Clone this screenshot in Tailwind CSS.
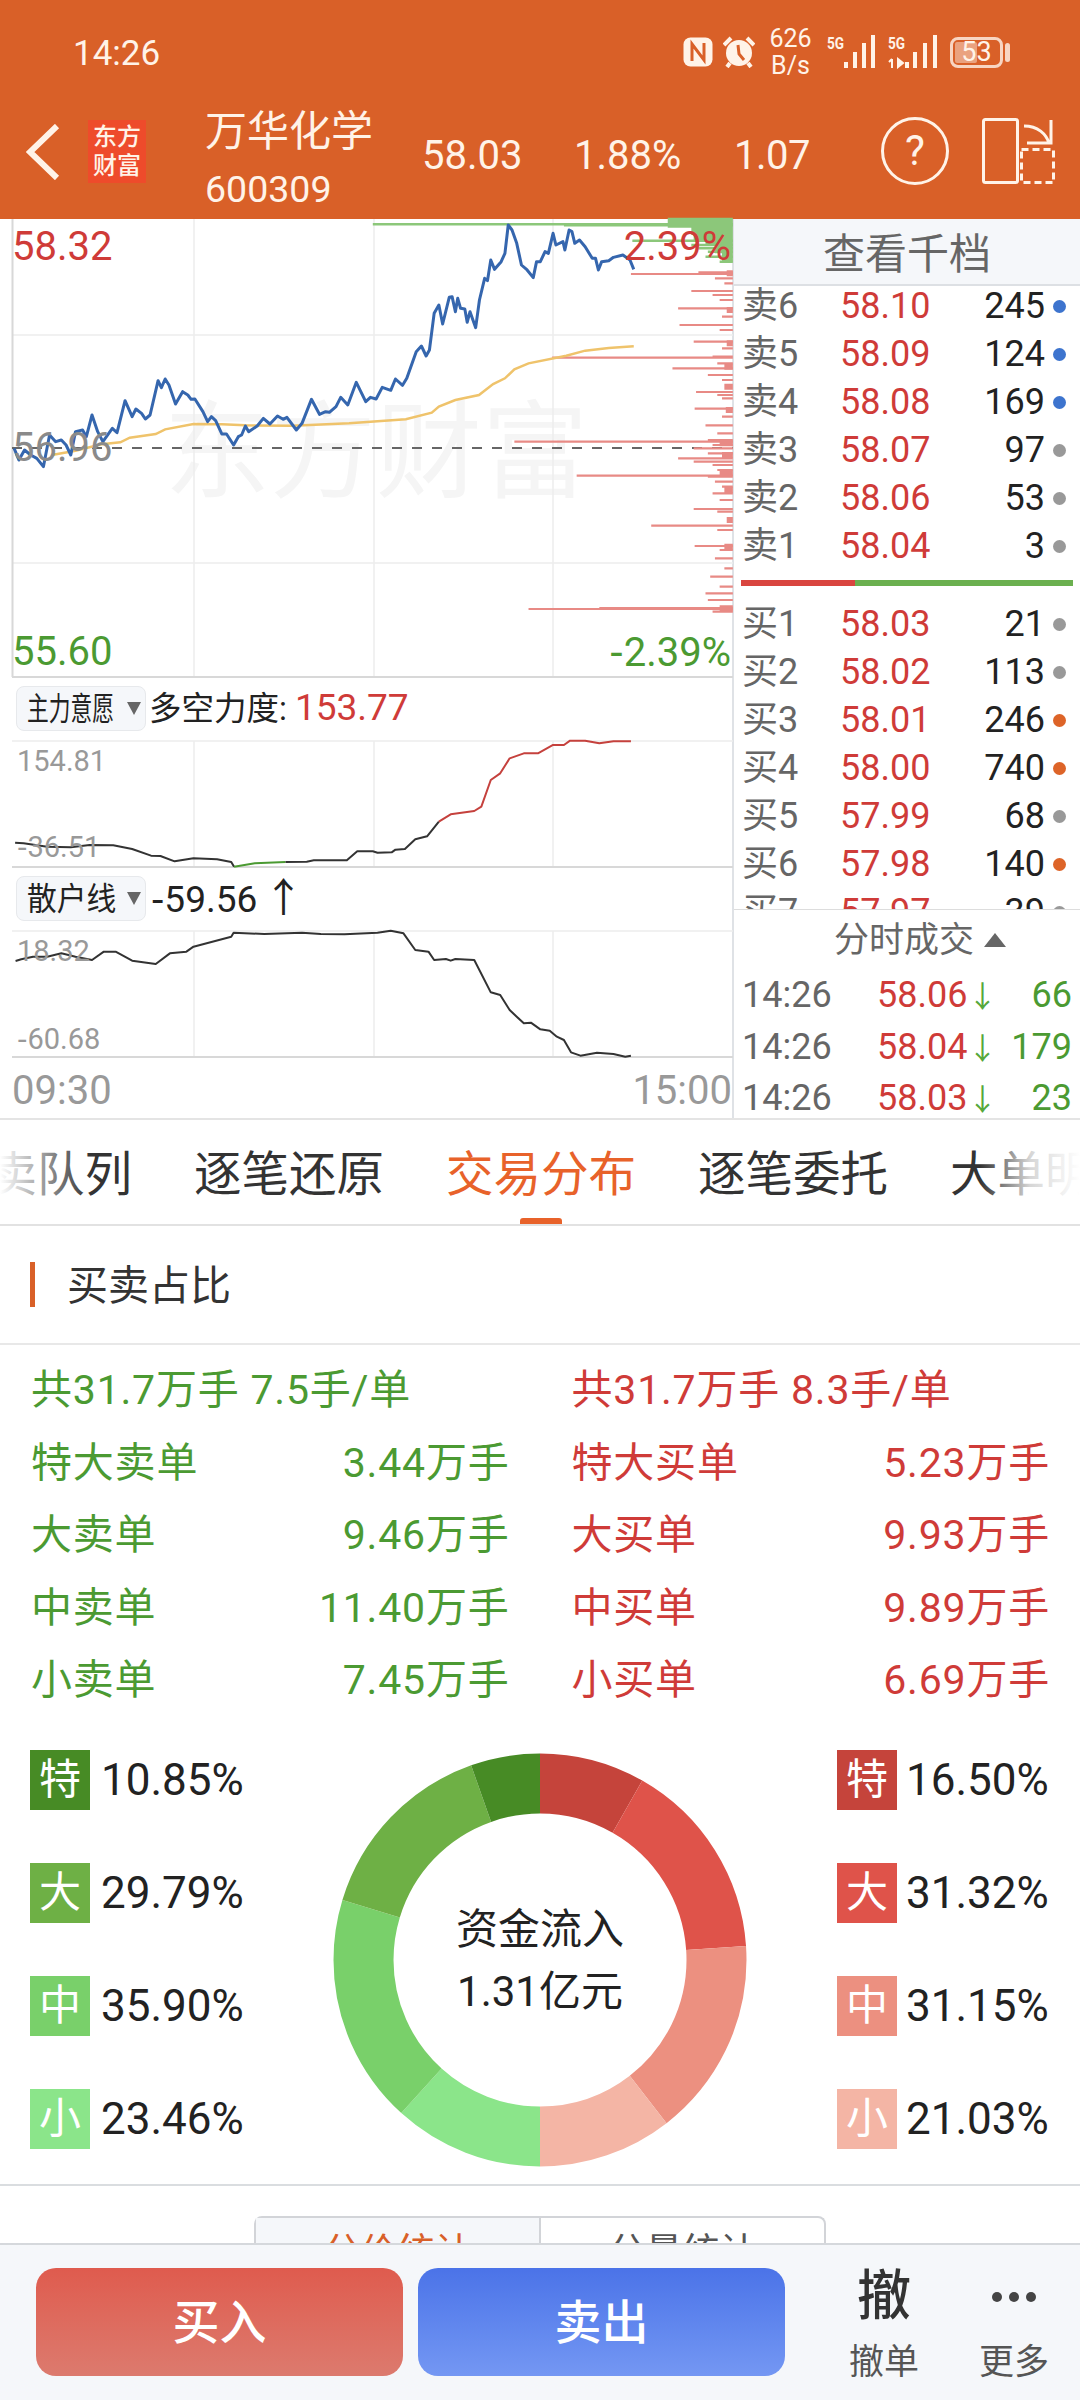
<!doctype html>
<html lang="zh"><head><meta charset="utf-8"><script src="https://cdn.jsdelivr.net/npm/@tailwindcss/browser@4"></script></head>
<body class="m-0 bg-white font-['Roboto','Noto_Sans_CJK_SC',sans-serif]">
<div class="relative w-[1080px] h-[2400px] overflow-hidden bg-white text-[#222]">

<!-- Header -->
<header class="h-[219px] bg-[#D96028] text-[#FFF3E8] flex flex-col">
  <div class="h-[100px] flex items-center pl-[73px] pr-[70px] pt-[4px]">
    <span class="text-[35px] leading-none mt-[2px]">14:26</span>
    <div class="ml-auto flex items-center">
      <svg class="w-[30px] h-[30px]" viewBox="0 0 30 30"><rect x="0.500" y="0.500" width="29" height="29" rx="7" fill="#FFF3E8"/><path d="M9 24V7l12 16V6" fill="none" stroke="#D96028" stroke-width="3"/></svg>
      <svg class="ml-[10px] w-[32px] h-[32px]" viewBox="0 0 32 32"><circle cx="16" cy="17" r="13" fill="#FFF3E8"/><path d="M15 9l1 9 5 6" fill="none" stroke="#D96028" stroke-width="3"/><path d="M1 9l7-7M31 9l-7-7M7 27l-3 4M25 27l3 4" stroke="#FFF3E8" stroke-width="4"/></svg>
      <div class="ml-[16px] w-[39px] flex flex-col items-center text-[25px] leading-[27px] whitespace-nowrap"><span>626</span><span>B/s</span></div>
      <div class="ml-[17px] relative w-[51px] h-[34px]">
        <span class="absolute left-0 top-[0px] text-[17px] font-bold leading-none origin-left scale-x-[.8]">5G</span>
        <svg class="w-[51px] h-[34px]" viewBox="0 0 51 34"><path d="M19 33v-6M28 33V17M37 33V8M46 33V0" stroke="#FFF3E8" stroke-width="4"/></svg>
      </div>
      <div class="ml-[10px] relative w-[50px] h-[34px]">
        <span class="absolute left-0 top-[0px] text-[17px] font-bold leading-none origin-left scale-x-[.8]">5G</span>
        <svg class="w-[50px] h-[34px]" viewBox="0 0 50 34"><path d="M4 33V24M1 27l3-3M10 24l5 4-5 4z" fill="#FFF3E8" stroke="#FFF3E8" stroke-width="2"/><path d="M19 33v-6M27 33V17M37 33V8M47 33V0" stroke="#FFF3E8" stroke-width="4"/></svg>
      </div>
      <div class="ml-[12px] relative w-[53px] h-[31px] rounded-[8px] border-[3px] border-[#FFF3E8]/80 flex items-center justify-center text-[27px] leading-none">
        <span class="absolute left-[2px] top-[2px] bottom-[2px] w-[22px] bg-[#FFF3E8]/45 rounded-[2px]"></span><span class="relative">53</span>
      </div>
      <span class="ml-[2px] w-[5px] h-[19px] bg-[#FFF3E8]/80 rounded-full"></span>
    </div>
  </div>
  <div class="h-[119px] flex items-center relative">
    <svg class="ml-[26px] mt-[-16px] w-[34px] h-[56px]" viewBox="0 0 34 56"><path d="M31 2 4 28l27 26" fill="none" stroke="#FFF3E8" stroke-width="6"/></svg>
    <div class="ml-[28px] mt-[-16px] w-[58px] h-[63px] bg-[#EE4B2B] flex flex-col items-center justify-center text-[#FFF3E8] text-[24px] leading-[29px] font-medium"><span>东方</span><span>财富</span></div>
    <div class="ml-[59px] mt-[6px] w-[217px] flex flex-col">
      <span class="text-[42px] leading-[52px]">万华化学</span>
      <span class="text-[37.500px] leading-[62px]">600309</span>
    </div>
    <span class="text-[40px] leading-none w-[152px] mt-[-7px]">58.03</span>
    <span class="text-[40px] leading-none w-[160px] mt-[-7px]">1.88%</span>
    <span class="text-[40px] leading-none mt-[-7px] tracking-[-.5px]">1.07</span>
    <div class="absolute left-[881px] top-[17px] w-[68px] h-[68px] rounded-full border-[3px] border-[#FFF3E8] flex items-center justify-center text-[42px] leading-none">?</div>
    <svg class="absolute left-[980px] top-[16px] w-[78px] h-[70px]" viewBox="0 0 78 70"><rect x="3.500" y="3.500" width="34" height="63" rx="2" fill="none" stroke="#FFF3E8" stroke-width="3"/><path d="M41.500 33.500h32v33h-32z" fill="none" stroke="#FFF3E8" stroke-width="3" stroke-dasharray="7 4"/><path d="M44 10c14 0 22 8 25 17M71 4v23H47" fill="none" stroke="#FFF3E8" stroke-width="3"/></svg>
  </div>
</header>

<!-- Chart + order book -->
<section class="flex h-[901px] border-b-[2px] border-[#e4e4e4]">
  <div class="relative w-[734px] border-r-[2px] border-[#dfe2e6]">
    <svg class="absolute left-0 top-[-9px] w-[734px] h-[910px]" viewBox="0 210 734 910" fill="none">
      <text x="164" y="489" font-size="106" fill="#F5F5F5" font-family="Noto Sans CJK SC">东方财富</text>
      <g stroke="#EDEDED" stroke-width="1.500">
        <path d="M194 219V676M374 219V676M553 219V676M12 335H733M12 563H733"/>
        <path d="M194 741V867M374 741V867M553 741V867M194 931V1057M374 931V1057M553 931V1057M12 741H733M12 931H733"/>
      </g>
      <path d="M12.500 219V677M12 677H733M12 867H733M12 1057H733" stroke="#D8D8D8" stroke-width="2"/>
      <path d="M12 448H733" stroke="#666" stroke-width="2" stroke-dasharray="10 10"/>
      <g transform="translate(0 210) scale(0.4719 0.33333)">
        <path vector-effect="non-scaling-stroke" stroke="#8CC77A" stroke-width="2.500" d="M790 43H1553M1195 46H1553M1340 92H1553M1465 105H1553M1480 115H1553M1500 125H1553M1495 140H1553M1525 155H1553"/>
        <path vector-effect="non-scaling-stroke" stroke="#8CC77A" stroke-width="10" d="M1415 38H1553M1465 60H1553M1470 75H1553M1495 90H1553M1515 115H1553M1530 140H1553"/>
        <path vector-effect="non-scaling-stroke" stroke="#E88A85" stroke-width="2.200" d="M1337 192H1553M1480 187H1553M1515 205H1553M1535 220H1553M1465 243H1553M1510 255H1553M1525 270H1553M1437 295H1553M1530 320H1553M1440 345H1553M1525 360H1553M1470 395H1553M1530 415H1553M1170 443H1553M1510 440H1553M1520 460H1553M1425 475H1553M1500 495H1553M1530 510H1553M1475 546H1553M1520 555H1553M1530 565H1553M1472 596H1553M1530 620H1553M1495 646H1553M1520 670H1553M1090 695H1553M1500 690H1553M1510 705H1553M1470 715H1553M1500 730H1553M1437 745H1553M1470 755H1553M1510 765H1553M1520 780H1553M1222 797H1553M1500 800H1553M1515 815H1553M1530 830H1553M1510 850H1553M1525 870H1553M1470 897H1553M1520 905H1553M1380 947H1553M1520 960H1553M1472 1008H1553M1525 1020H1553M1515 1045H1553M1535 1075H1553M1505 1100H1553M1525 1130H1553M1495 1150H1553M1500 1170H1553M1120 1197H1553M1270 1194H1553M1510 1205H1553"/>
        <path vector-effect="non-scaling-stroke" stroke="#E88A85" stroke-width="6" d="M1535 530H1553M1525 700H1553M1525 790H1553M1525 1195H1553M1540 400H1553M1538 600H1553M1540 930H1553M1540 300H1553M1535 470H1553M1530 735H1553M1535 840H1553M1535 1010H1553M1540 190H1553"/>
        <polyline vector-effect="non-scaling-stroke" stroke="#EFC36B" stroke-width="2.500" points="110,735 160,722 215,703 255,697 275,683 330,672 350,658 410,642 470,643 520,646 620,647 740,640 860,628 915,608 930,590 965,570 1015,555 1045,522 1070,505 1090,478 1120,460 1200,437 1240,422 1290,414 1343,409"/>
        <polyline vector-effect="non-scaling-stroke" stroke="#3566AE" stroke-width="3" stroke-linejoin="round" points="30,715 40,750 52,720 65,735 78,745 92,770 105,675 118,695 130,690 140,705 150,735 160,665 175,660 183,680 195,615 207,665 218,695 238,655 248,668 265,572 280,620 288,597 300,610 308,627 318,615 335,512 342,533 350,507 358,525 372,582 387,545 398,555 405,568 413,567 430,605 440,635 448,620 457,632 470,672 480,672 495,705 505,680 512,675 520,648 527,665 545,648 558,625 572,642 588,618 600,628 608,622 628,660 640,640 660,568 677,613 690,605 698,607 712,590 722,562 737,585 755,517 775,575 785,562 797,567 810,532 828,541 838,507 853,526 862,505 882,425 893,408 903,438 910,420 920,310 930,285 938,342 952,262 958,260 965,305 970,265 976,295 985,297 990,337 996,305 1008,353 1016,270 1027,205 1033,212 1040,150 1048,178 1062,155 1070,130 1077,45 1085,60 1095,100 1105,165 1117,180 1130,203 1137,155 1145,155 1155,125 1162,130 1172,70 1178,105 1193,95 1197,120 1206,60 1212,65 1218,100 1228,90 1240,110 1255,145 1262,145 1268,180 1275,155 1290,152 1300,142 1320,135 1335,150 1343,178"/>
      </g>
      <g transform="translate(0 670) scale(0.4719 0.33333)" stroke-width="2" stroke-linejoin="round">
        <polyline vector-effect="non-scaling-stroke" stroke="#333" points="32,518 50,520 100,530 150,532 190,525 240,526 280,537 320,557 340,558 370,574 410,565 460,568 490,576 496,590"/>
        <polyline vector-effect="non-scaling-stroke" stroke="#4B9A32" points="496,590 540,580 605,576"/>
        <polyline vector-effect="non-scaling-stroke" stroke="#333" points="605,576 650,575 665,571 735,571 757,544 790,544 800,548 830,547 838,539 858,537 880,508 905,499 930,455"/>
        <polyline vector-effect="non-scaling-stroke" stroke="#C5413D" points="930,455 955,433 1005,423 1020,410 1040,330 1060,310 1080,265 1110,250 1140,250 1172,225 1195,225 1208,212 1240,212 1270,220 1300,214 1337,214"/>
        <polyline vector-effect="non-scaling-stroke" stroke="#333" points="33,873 45,868 70,860 100,860 130,850 160,860 195,870 220,845 245,845 280,872 330,882 360,850 395,845 410,830 490,800 495,788 560,792 640,788 680,792 730,793 800,788 828,782 855,790 880,840 908,845 920,870 945,867 955,872 965,867 1005,870 1040,967 1060,975 1080,1020 1095,1040 1110,1060 1125,1058 1145,1078 1165,1082 1180,1100 1195,1110 1210,1147 1230,1157 1265,1148 1300,1152 1325,1160 1337,1157"/>
      </g>
    </svg>
    <span class="absolute left-[12px] top-[8px] text-[40px] leading-[40px] text-[#CF3B38]">58.32</span>
    <span class="absolute right-[1px] top-[8px] text-[40px] leading-[40px] text-[#CF3B38]">2.39%</span>
    <span class="absolute left-[12px] top-[209px] text-[40px] leading-[40px] text-[#8A8A8A]">56.96</span>
    <span class="absolute left-[12px] top-[413px] text-[40px] leading-[40px] text-[#4B9A32]">55.60</span>
    <span class="absolute right-[1px] top-[413px] text-[40px] leading-[40px] text-[#4B9A32]"><span class="font-['DejaVu_Sans']">-</span>2.39%</span>

    <div class="absolute left-[16px] top-[467px] w-[130px] h-[45px] rounded-[8px] border border-[#E7E9EC] bg-[#F5F7FA] flex items-center pl-[10px]"><span class="text-[32px] leading-none origin-left scale-x-[.68] w-[88px] whitespace-nowrap">主力意愿</span><span class="ml-[12px] w-0 h-0 border-x-[7px] border-x-transparent border-t-[13px] border-t-[#666]"></span></div>
    <div class="absolute left-[149px] top-[468px] text-[32.500px] leading-[42px] whitespace-nowrap">多空力度: <span class="text-[37px] text-[#CF3B38]">153.77</span></div>
    <span class="absolute left-[17px] top-[525px] text-[29px] leading-[34px] text-[#999]">154.81</span>
    <span class="absolute left-[17px] top-[611px] text-[29px] leading-[34px] text-[#999]"><span class="font-['DejaVu_Sans']">-</span>36.51</span>

    <div class="absolute left-[16px] top-[657px] w-[130px] h-[45px] rounded-[8px] border border-[#E7E9EC] bg-[#F5F7FA] flex items-center pl-[10px]"><span class="text-[32px] leading-none origin-left scale-x-[.93] w-[88px] whitespace-nowrap">散户线</span><span class="ml-[12px] w-0 h-0 border-x-[7px] border-x-transparent border-t-[13px] border-t-[#666]"></span></div>
    <div class="absolute left-[151px] top-[659px] text-[37px] leading-[42px] whitespace-nowrap"><span class="font-['DejaVu_Sans']">-</span>59.56 <span class="text-[40px] ml-[-3px]">↑</span></div>
    <span class="absolute left-[17px] top-[715px] text-[29px] leading-[34px] text-[#999]">18.32</span>
    <span class="absolute left-[17px] top-[803px] text-[29px] leading-[34px] text-[#999]"><span class="font-['DejaVu_Sans']">-</span>60.68</span>

    <span class="absolute left-[12px] top-[852px] text-[40px] leading-[40px] text-[#999]">09:30</span>
    <span class="absolute right-0 top-[852px] text-[40px] leading-[40px] text-[#999]">15:00</span>
  </div>

  <aside class="w-[346px] flex flex-col">
    <div class="h-[67px] shrink-0 bg-[#F5F7FA] border-b-[2px] border-[#DDE0E4] flex items-center justify-center text-[42px] text-[#666] leading-none pt-[6px]">查看千档</div>
    <div class="h-[624px] shrink-0 overflow-hidden border-b border-[#ddd] text-[36px] leading-[48px] pl-[8px]">
      <div class="grid grid-cols-[98px_115px_90px_1fr] items-center mt-[-4px]">
        <span class="text-[#666]">卖6</span><span class="text-[#CF3B38]">58.10</span><span class="text-right">245</span><span class="ml-[8px] w-[13px] h-[13px] rounded-full bg-[#3D74CE]"></span>
        <span class="text-[#666]">卖5</span><span class="text-[#CF3B38]">58.09</span><span class="text-right">124</span><span class="ml-[8px] w-[13px] h-[13px] rounded-full bg-[#3D74CE]"></span>
        <span class="text-[#666]">卖4</span><span class="text-[#CF3B38]">58.08</span><span class="text-right">169</span><span class="ml-[8px] w-[13px] h-[13px] rounded-full bg-[#3D74CE]"></span>
        <span class="text-[#666]">卖3</span><span class="text-[#CF3B38]">58.07</span><span class="text-right">97</span><span class="ml-[8px] w-[13px] h-[13px] rounded-full bg-[#999]"></span>
        <span class="text-[#666]">卖2</span><span class="text-[#CF3B38]">58.06</span><span class="text-right">53</span><span class="ml-[8px] w-[13px] h-[13px] rounded-full bg-[#999]"></span>
        <span class="text-[#666]">卖1</span><span class="text-[#CF3B38]">58.04</span><span class="text-right">3</span><span class="ml-[8px] w-[13px] h-[13px] rounded-full bg-[#999]"></span>
      </div>
      <div class="flex h-[6px] w-[332px] ml-[-1px] mt-[10px] mb-[14px]"><span class="w-[114px] bg-[#D9453F]"></span><span class="flex-1 bg-[#6BB04F]"></span></div>
      <div class="grid grid-cols-[98px_115px_90px_1fr] items-center">
        <span class="text-[#666]">买1</span><span class="text-[#CF3B38]">58.03</span><span class="text-right">21</span><span class="ml-[8px] w-[13px] h-[13px] rounded-full bg-[#999]"></span>
        <span class="text-[#666]">买2</span><span class="text-[#CF3B38]">58.02</span><span class="text-right">113</span><span class="ml-[8px] w-[13px] h-[13px] rounded-full bg-[#999]"></span>
        <span class="text-[#666]">买3</span><span class="text-[#CF3B38]">58.01</span><span class="text-right">246</span><span class="ml-[8px] w-[13px] h-[13px] rounded-full bg-[#DD6428]"></span>
        <span class="text-[#666]">买4</span><span class="text-[#CF3B38]">58.00</span><span class="text-right">740</span><span class="ml-[8px] w-[13px] h-[13px] rounded-full bg-[#DD6428]"></span>
        <span class="text-[#666]">买5</span><span class="text-[#CF3B38]">57.99</span><span class="text-right">68</span><span class="ml-[8px] w-[13px] h-[13px] rounded-full bg-[#999]"></span>
        <span class="text-[#666]">买6</span><span class="text-[#CF3B38]">57.98</span><span class="text-right">140</span><span class="ml-[8px] w-[13px] h-[13px] rounded-full bg-[#DD6428]"></span>
        <span class="text-[#666]">买7</span><span class="text-[#CF3B38]">57.97</span><span class="text-right">39</span><span class="ml-[8px] w-[13px] h-[13px] rounded-full bg-[#999]"></span>
      </div>
    </div>
    <div class="h-[60px] shrink-0 flex items-center justify-center text-[35px] text-[#666] leading-none pl-[26px]"><span>分时成交</span><span class="ml-[10px] w-0 h-0 border-x-[11px] border-x-transparent border-b-[14px] border-b-[#666]"></span></div>
    <div class="grid grid-cols-[135px_95px_1fr] auto-rows-[51.500px] pl-[8px] pr-[8px] text-[36px] leading-[51.500px] items-center">
      <span class="text-[#666]">14:26</span><span class="text-[#CF3B38] whitespace-nowrap">58.06<span class="text-[#56A83B] text-[30px] leading-none">↓</span></span><span class="text-right text-[#4B9A32]">66</span>
      <span class="text-[#666]">14:26</span><span class="text-[#CF3B38] whitespace-nowrap">58.04<span class="text-[#56A83B] text-[30px] leading-none">↓</span></span><span class="text-right text-[#4B9A32]">179</span>
      <span class="text-[#666]">14:26</span><span class="text-[#CF3B38] whitespace-nowrap">58.03<span class="text-[#56A83B] text-[30px] leading-none">↓</span></span><span class="text-right text-[#4B9A32]">23</span>
    </div>
  </aside>
</section>

<!-- Tabs -->
<nav class="relative h-[106px] border-b-[2px] border-[#E2E2E2] overflow-hidden">
  <div class="flex gap-[62px] ml-[-58px] pt-[30px] text-[47.500px] leading-[50px] text-[#333] whitespace-nowrap">
    <span>买卖队列</span><span>逐笔还原</span><span class="text-[#E8622A]">交易分布</span><span>逐笔委托</span><span>大单明细</span>
  </div>
  <span class="absolute left-[520px] bottom-0 w-[42px] h-[6px] rounded-t-[3px] bg-[#E8622A]"></span>
  <span class="absolute left-0 top-0 h-full w-[90px] bg-gradient-to-r from-white to-white/0"></span>
  <span class="absolute right-0 top-0 h-full w-[100px] bg-gradient-to-l from-white via-white/80 to-white/0"></span>
</nav>

<!-- Section head -->
<div class="h-[119px] border-b-[2px] border-[#E8E8E8] flex items-center">
  <span class="ml-[30px] w-[5px] h-[45px] bg-[#D96028]"></span>
  <span class="ml-[32px] mt-[4px] text-[41px] leading-none text-[#333]">买卖占比</span>
</div>

<!-- Rows -->
<div class="grid grid-cols-2 pt-[9px] text-[41px] tracking-[.8px] leading-[72.500px] pl-[31px] pr-[30px] h-[381px]">
  <div class="pr-[31px] text-[#4B9A32]">
    <div class="whitespace-nowrap">共31.7万手 7.5手/单</div>
    <div class="flex justify-between"><span>特大卖单</span><span>3.44万手</span></div>
    <div class="flex justify-between"><span>大卖单</span><span>9.46万手</span></div>
    <div class="flex justify-between"><span>中卖单</span><span>11.40万手</span></div>
    <div class="flex justify-between"><span>小卖单</span><span>7.45万手</span></div>
  </div>
  <div class="pl-[31px] text-[#CF3B38]">
    <div class="whitespace-nowrap">共31.7万手 8.3手/单</div>
    <div class="flex justify-between"><span>特大买单</span><span>5.23万手</span></div>
    <div class="flex justify-between"><span>大买单</span><span>9.93万手</span></div>
    <div class="flex justify-between"><span>中买单</span><span>9.89万手</span></div>
    <div class="flex justify-between"><span>小买单</span><span>6.69万手</span></div>
  </div>
</div>

<!-- Donut -->
<div class="relative h-[460px] border-b-[2px] border-[#DADDE0]">
  <div class="absolute left-[30px] top-[24px] flex flex-col gap-[53px] text-[44px] leading-[60px]">
    <div class="flex gap-[11px]"><span class="w-[60px] h-[60px] bg-[#478B25] text-white text-[42px] text-center">特</span><span>10.85%</span></div>
    <div class="flex gap-[11px]"><span class="w-[60px] h-[60px] bg-[#6EB045] text-white text-[42px] text-center">大</span><span>29.79%</span></div>
    <div class="flex gap-[11px]"><span class="w-[60px] h-[60px] bg-[#79D06A] text-white text-[42px] text-center">中</span><span>35.90%</span></div>
    <div class="flex gap-[11px]"><span class="w-[60px] h-[60px] bg-[#8BE58A] text-white text-[42px] text-center">小</span><span>23.46%</span></div>
  </div>
  <div class="absolute left-[837px] top-[24px] flex flex-col gap-[53px] text-[44px] leading-[60px]">
    <div class="flex gap-[9px]"><span class="w-[60px] h-[60px] bg-[#C5443B] text-white text-[42px] text-center">特</span><span>16.50%</span></div>
    <div class="flex gap-[9px]"><span class="w-[60px] h-[60px] bg-[#DF534A] text-white text-[42px] text-center">大</span><span>31.32%</span></div>
    <div class="flex gap-[9px]"><span class="w-[60px] h-[60px] bg-[#EC9080] text-white text-[42px] text-center">中</span><span>31.15%</span></div>
    <div class="flex gap-[9px]"><span class="w-[60px] h-[60px] bg-[#F4B5A5] text-white text-[42px] text-center">小</span><span>21.03%</span></div>
  </div>
  <svg class="absolute left-[333px] top-[27px] w-[414px] h-[414px]" viewBox="0 0 414 414" fill="none">
    <g transform="rotate(-90 207 207)" stroke-width="60">
      <circle cx="207" cy="207" r="176.500" pathLength="360" stroke="#C5443B" stroke-dasharray="29.7 330.3"/>
      <circle cx="207" cy="207" r="176.500" pathLength="360" stroke="#DF534A" stroke-dasharray="56.4 303.6" stroke-dashoffset="-29.7"/>
      <circle cx="207" cy="207" r="176.500" pathLength="360" stroke="#EC9080" stroke-dasharray="56.1 303.9" stroke-dashoffset="-86.1"/>
      <circle cx="207" cy="207" r="176.500" pathLength="360" stroke="#F4B5A5" stroke-dasharray="37.8 322.2" stroke-dashoffset="-142.2"/>
      <circle cx="207" cy="207" r="176.500" pathLength="360" stroke="#8BE58A" stroke-dasharray="42.2 317.8" stroke-dashoffset="-180"/>
      <circle cx="207" cy="207" r="176.500" pathLength="360" stroke="#79D06A" stroke-dasharray="64.7 295.3" stroke-dashoffset="-222.2"/>
      <circle cx="207" cy="207" r="176.500" pathLength="360" stroke="#6EB045" stroke-dasharray="53.6 306.4" stroke-dashoffset="-286.9"/>
      <circle cx="207" cy="207" r="176.500" pathLength="360" stroke="#478B25" stroke-dasharray="19.5 340.5" stroke-dashoffset="-340.5"/>
    </g>
  </svg>
  <div class="absolute left-[333px] top-[28px] w-[414px] h-[414px] flex flex-col items-center justify-center text-[42px] leading-[62px]"><span>资金流入</span><span>1.31亿元</span></div>
</div>

<!-- Segmented control peeking out under the bar -->
<div class="absolute left-[254px] top-[2216px] w-[572px] h-[60px] rounded-t-[8px] border-[2px] border-b-0 border-[#D2D4D8] flex text-[37px] leading-none">
  <div class="w-[285px] bg-[#F5F7FA] border-r-[2px] border-[#D2D4D8] text-center pt-[16px] text-[#D96028]">分价统计</div>
  <div class="flex-1 text-center pt-[16px] text-[#555]">分量统计</div>
</div>

<!-- Bottom bar -->
<footer class="absolute left-0 right-0 bottom-0 h-[157px] bg-[#F5F7FA] border-t-[2px] border-[#D5D8DC] flex items-start pt-[23px]">
  <button class="ml-[36px] w-[367px] h-[108px] rounded-[20px] bg-gradient-to-b from-[#DF5B4E] to-[#DC7A6E] text-white text-[47px] font-medium leading-none">买入</button>
  <button class="ml-[15px] w-[367px] h-[108px] rounded-[20px] bg-gradient-to-b from-[#4B73E8] to-[#7497F3] text-white text-[47px] font-medium leading-none">卖出</button>
  <div class="ml-[64px] w-[70px] flex flex-col items-center mt-[-3px]">
    <span class="text-[54px] leading-[64px] font-medium text-[#333]">撤</span>
    <span class="text-[35px] leading-[40px] mt-[14px] text-[#555]">撤单</span>
  </div>
  <div class="ml-[59px] w-[72px] flex flex-col items-center mt-[-3px]">
    <span class="h-[64px] flex items-center gap-[7px]"><i class="w-[10px] h-[10px] rounded-full bg-[#444]"></i><i class="w-[10px] h-[10px] rounded-full bg-[#444]"></i><i class="w-[10px] h-[10px] rounded-full bg-[#444]"></i></span>
    <span class="text-[35px] leading-[40px] mt-[14px] text-[#555]">更多</span>
  </div>
</footer>
</div>
</body></html>
